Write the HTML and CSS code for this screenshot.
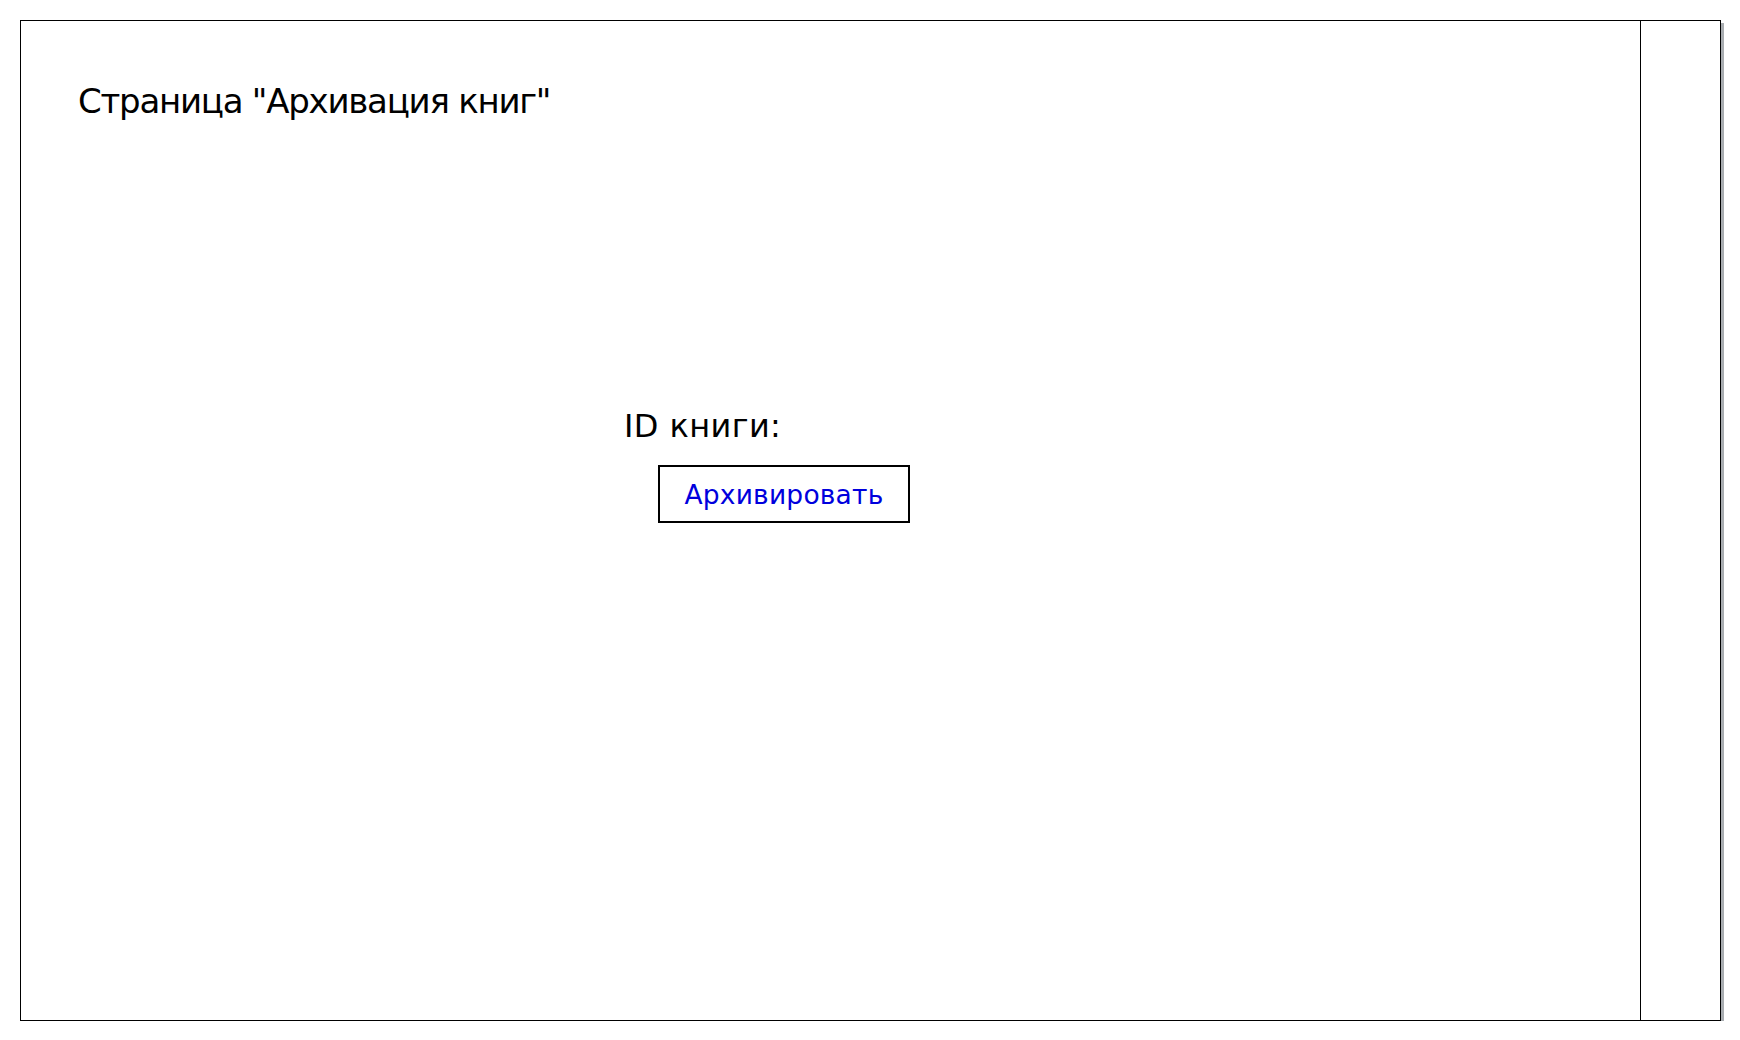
FILE: index.html
```html
<!DOCTYPE html>
<html lang="ru">
<head>
<meta charset="utf-8">
<title>Архивация книг</title>
<link rel="stylesheet" href="styles.css">
</head>
<body>
<div class="frame">
  <main class="main">
    <h1 class="title">Страница "Архивация книг"</h1>
    <section class="form">
      <div class="label">ID книги:</div>
      <button class="btn" type="button">Архивировать</button>
    </section>
  </main>
  <aside class="side"></aside>
</div>
</body>
</html>
```
FILE: styles.css
```css
html, body {
  margin: 0;
  padding: 0;
  background: #ffffff;
}
body {
  font-family: "DejaVu Sans", Verdana, sans-serif;
  color: #000;
}
.frame {
  box-sizing: border-box;
  margin: 20px 0 0 20px;
  width: 1701px;
  height: 1001px;
  border: 1px solid #000;
  display: flex;
  box-shadow: 3px 3px 0 #a9adb1;
}
.main {
  flex: 1;
  display: flex;
  flex-direction: column;
}
.title {
  margin: 0;
  padding: 60px 0 0 57px;
  font-weight: normal;
  font-size: 34px;
  letter-spacing: -1.25px;
  line-height: 40px;
}
.form {
  padding: 285px 0 0 603px;
  display: flex;
  flex-direction: column;
  align-items: flex-start;
}
.label {
  font-size: 32px;
  letter-spacing: 0.4px;
  line-height: 40px;
}
.btn {
  margin: 19px 0 0 34px;
  box-sizing: border-box;
  width: 252px;
  height: 58px;
  border: 2px solid #000;
  background: #fff;
  color: #0000dd;
  font-family: inherit;
  font-size: 26.5px;
  letter-spacing: 0.2px;
  padding: 0;
  border-radius: 0;
}
.side {
  width: 79px;
  border-left: 1px solid #000;
}
```
